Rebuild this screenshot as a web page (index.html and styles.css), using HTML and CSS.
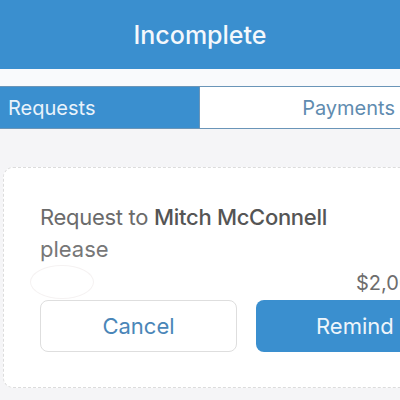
FILE: index.html
```html
<!DOCTYPE html>
<html lang="en">
<head>
    <meta charset="UTF-8">
    <meta name="viewport" content="width=device-width, initial-scale=1.0">
    <title>Incomplete</title>
    <link rel="stylesheet" href="styles.css">
</head>
<body>
    <!-- Header -->
    <header class="top-bar">
        <h1>Incomplete</h1>
    </header>

    <!-- Tabs -->
    <div class="tabs-wrap">
        <div class="tabs">
            <div class="tab active">Requests</div>
            <div class="tab">Payments</div>
        </div>
    </div>

    <!-- Request card -->
    <main class="list">
        <div class="card">
            <p class="title">Request to <strong>Mitch McConnell</strong></p>
            <p class="note">please</p>
            <div class="amount-row">
                <span class="avatar"></span>
                <span class="amount">$2,000.00</span>
            </div>
            <div class="actions">
                <button class="btn btn-outline">Cancel</button>
                <button class="btn btn-primary">Remind</button>
            </div>
        </div>
    </main>
</body>
</html>
```

FILE: styles.css
```css
/* Page */
body {
    font-family: Inter, "Noto Sans", sans-serif;
    margin: 0;
    width: 400px;
    height: 400px;
    overflow: hidden;
    background: #f5f5f7;
}
.top-bar {
    background: #3a8fcf;
    height: 69px;
    display: flex;
    justify-content: center;
    align-items: center;
}
.top-bar h1 {
    margin: 0;
    color: #f4f8fc;
    font-size: 25px;
    font-weight: 500;
}
.tabs-wrap {
    background: #f9fafc;
    padding-top: 17px;
}
.tabs {
    display: flex;
    height: 41px;
    border-top: 1px solid #6a95b8;
    border-bottom: 1px solid #6a95b8;
}
.tab {
    width: 50%;
    box-sizing: border-box;
    display: flex;
    align-items: center;
    justify-content: flex-end;
    padding-right: 5px;
    font-size: 20px;
    color: #5f8cb0;
    background: #fff;
}
.tab.active {
    justify-content: flex-start;
    padding-left: 8px;
    background: #3a8fcf;
    color: #e9f3fb;
    border-right: 1px solid #6a95b8;
}
.list {
    padding: 38px 0 0 3px;
}
.card {
    width: 480px;
    height: 221px;
    box-sizing: border-box;
    background: #fff;
    border: 1px dashed #dcdcdc;
    border-radius: 10px;
    padding: 36px 0 0 36px;
}
.title {
    margin: 0;
    font-size: 22px;
    line-height: 27px;
    color: #6b6b6b;
    letter-spacing: -0.3px;
}
.title strong {
    font-weight: 500;
    color: #555;
}
.note {
    margin: 5px 0 0;
    font-size: 22px;
    line-height: 27px;
    color: #777;
}
.amount-row {
    display: flex;
    align-items: center;
    height: 37px;
    margin-left: -10px;
}
.avatar {
    width: 62px;
    height: 32px;
    border-radius: 50%;
    border: 1px solid #f5f2f2;
}
.amount {
    font-size: 20px;
    color: #6d6d6d;
    margin-left: 262px;
    padding-top: 3px;
    white-space: nowrap;
}
.actions {
    display: flex;
    gap: 19px;
}
.btn {
    height: 52px;
    border-radius: 8px;
    font-family: inherit;
    font-size: 22px;
    cursor: pointer;
}
.btn-outline {
    width: 197px;
    background: #fff;
    border: 1px solid #dedede;
    color: #4a86b8;
}
.btn-primary {
    width: 200px;
    background: #3a8fcf;
    border: none;
    color: #eef5fb;
    text-align: left;
    padding-left: 60px;
}
```
